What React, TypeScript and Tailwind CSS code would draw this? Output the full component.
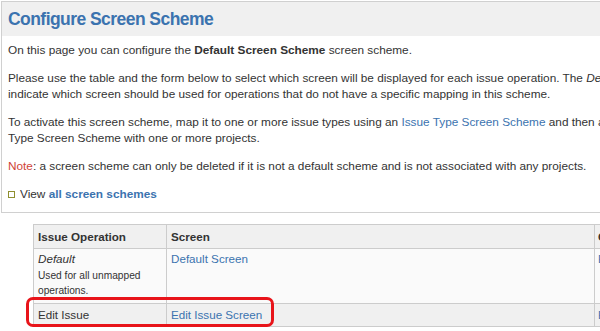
import React from "react";

const link = "text-[#3b73af]";

export default function App() {
  return (
    <div className="relative w-[600px] h-[331px] overflow-hidden bg-white font-['Liberation_Sans',Arial,sans-serif] text-[#333]">
      <div className="w-[900px] pt-px pl-px">
        <section className="border border-[#d0d0d0]">
          <header className="h-[34px] bg-[#f0f0f0] flex items-center px-[6px] pt-[2px]">
            <h2 className="text-[17.5px] tracking-[-0.55px] font-bold text-[#3b73af] leading-none">Configure Screen Scheme</h2>
          </header>
          <div className="px-[6px] pt-[6px] pb-[10px] text-[11.8px] leading-4 flex flex-col gap-3 whitespace-nowrap">
            <p>
              On this page you can configure the <b>Default Screen Scheme</b> screen scheme.
            </p>
            <p>
              Please use the table and the form below to select which screen will be displayed for each issue operation. The{" "}
              <i>Default</i> entry can be used to
              <br />
              indicate which screen should be used for operations that do not have a specific mapping in this scheme.
            </p>
            <p>
              To activate this screen scheme, map it to one or more issue types using an{" "}
              <span className={link}>Issue Type Screen Scheme</span> and then associate that Issue
              <br />
              Type Screen Scheme with one or more projects.
            </p>
            <p>
              <span className="text-[#d04437]">Note</span>: a screen scheme can only be deleted if it is not a default scheme and is not associated with any projects.
            </p>
            <p className="flex items-center gap-[5px]">
              <span className="inline-block w-[7px] h-[7px] border border-[#8f8f2f]" />
              <span>
                View <b className={link}>all screen schemes</b>
              </span>
            </p>
          </div>
        </section>

        <table className="ml-[32px] mt-[11px] border-collapse table-fixed text-[11.65px]">
          <thead>
            <tr className="bg-[#f0f0f0]">
              <th className="w-[133px] border border-[#ccc] px-[4px] py-[3px] leading-[17px] text-left font-bold">Issue Operation</th>
              <th className="w-[428px] border border-[#ccc] px-[4px] py-[3px] leading-[17px] text-left font-bold">Screen</th>
              <th className="w-[200px] border border-[#ccc] px-[3px] py-[3px] leading-[17px] text-left font-bold">Operations</th>
            </tr>
          </thead>
          <tbody>
            <tr className="bg-[#fafafa]">
              <td className="border border-[#ccc] px-[4px] pt-[2px] pb-[5px] align-top">
                <div className="italic leading-4">Default</div>
                <div className="text-[10.2px] leading-[15px] pt-[1px]">Used for all unmapped operations.</div>
              </td>
              <td className="border border-[#ccc] px-[4px] pt-[2px] align-top leading-4">
                <span className={link}>Default Screen</span>
              </td>
              <td className="border border-[#ccc] px-[3px] pt-[2px] align-top leading-4">
                <span className={link}>Edit</span>
              </td>
            </tr>
            <tr className="bg-[#f0f0f0]">
              <td className="border border-[#ccc] px-[4px] py-[3px] leading-[16px]">Edit Issue</td>
              <td className="border border-[#ccc] px-[4px] py-[3px] leading-[16px]">
                <span className={link}>Edit Issue Screen</span>
              </td>
              <td className="border border-[#ccc] px-[3px] py-[3px] leading-[16px]">
                <span className={link}>Edit</span>
              </td>
            </tr>
          </tbody>
        </table>
      </div>

      <div className="absolute left-[26px] top-[297px] w-[248px] h-[30px] border-[3px] border-[#e8141a] rounded-[7px]" />
    </div>
  );
}
